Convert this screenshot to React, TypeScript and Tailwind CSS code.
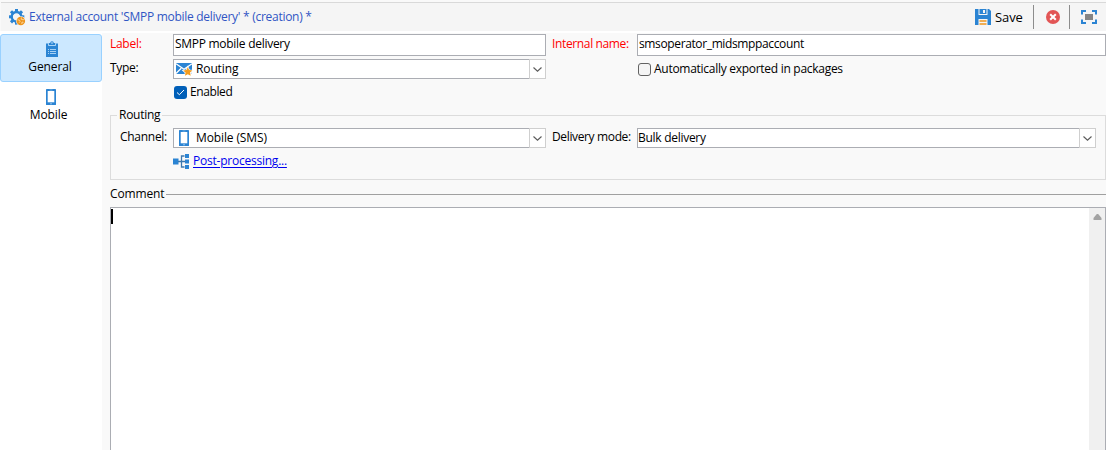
import React from "react";

function GearIcon() {
  const teeth = [0, 45, 90, 135, 180, 225, 270, 315];
  return (
    <svg width="17" height="17" viewBox="0 0 17 17" className="shrink-0">
      <g fill="#2b84d3">
        {teeth.map((a) => (
          <rect key={a} x="6" y="0" width="3" height="4" transform={`rotate(${a} 7.5 7.8)`} />
        ))}
      </g>
      <circle cx="7.5" cy="7.8" r="4.8" fill="none" stroke="#2b84d3" strokeWidth="2.4" />
      <circle cx="11.800" cy="12" r="4.800" fill="#f5f5f5" />
      <circle cx="11.800" cy="12" r="4.300" fill="#ee951c" />
      <path d="M8.500 10.800l2 .3 .6 1.600-1 1M12.500 8.500l-.4 1.700 2 .6 1.500-.6M12.800 15l.2-2 1.500.4" fill="none" stroke="#fbe0b4" strokeWidth="0.8" />
    </svg>
  );
}

function ClipboardIcon() {
  return (
    <svg width="12" height="16" viewBox="0 0 12 16">
      <path d="M0 2.500h3V2h1.200a1.800 1.800 0 0 1 3.600 0H9v.5h3V16H0z" fill="#2b84d3" />
      <path d="M2.500 2.500v2h7v-2" fill="none" stroke="#cce8ff" strokeWidth="0.8" />
      <circle cx="6" cy="2" r="0.8" fill="#cce8ff" />
      <path d="M2 8.500h1M4 8.500h6M2 10.500h1M4 10.500h6M2 12.500h1M4 12.500h6" stroke="#b5d9f6" strokeWidth="0.9" />
    </svg>
  );
}

function PhoneIcon() {
  return (
    <svg width="10" height="16" viewBox="0 0 10 16" className="shrink-0">
      <rect width="10" height="16" rx="0.6" fill="#2b84d3" />
      <rect x="1.700" y="2" width="6.600" height="11.300" fill="#fff" />
      <path d="M3.500 1h3" stroke="#8fc1ea" strokeWidth="0.7" />
      <circle cx="5" cy="14.700" r="0.7" fill="#b5d9f6" />
    </svg>
  );
}

function MailStarIcon() {
  return (
    <svg width="17" height="14" viewBox="0 0 17 14" className="shrink-0">
      <rect y="1" width="16" height="11" fill="#2b84d3" />
      <path d="M0 1.800l8 5.500 8-5.500M0 11.500l5.200-5.200M16 11.500l-5.200-5.200" fill="none" stroke="#fff" strokeWidth="1.300" />
      <path d="M11.800 5.200l1.400 2.900 3.200.4-2.400 2.100.7 3.200-2.900-1.600-2.900 1.600.7-3.200-2.400-2.100 3.200-.4z" fill="#f39c1f" stroke="#fff" strokeWidth="1.400" paintOrder="stroke" />
    </svg>
  );
}

function TreeIcon() {
  return (
    <svg width="16" height="15" viewBox="0 0 16 15" className="shrink-0">
      <path d="M0 4.500h5.500v6H0zM12 0h4v4h-4zM12 5.500h4v4h-4zM12 11h4v4h-4z" fill="#2b84d3" />
      <path d="M5 7.500h7M11.500 2H8.500v11h3" fill="none" stroke="#3c78ae" strokeWidth="1.300" />
    </svg>
  );
}

function SaveIcon() {
  return (
    <svg width="16" height="16" viewBox="0 0 16 16">
      <path d="M0 0h3.500v6h9V0H14l2 2v14H0z" fill="#2b84d3" />
      <path d="M4.500 0h7v5h-7z" fill="#2b84d3" />
      <path d="M8 1h2v3H8zM3.500 10h9v6h-9z" fill="#f5f5f5" />
      <path d="M4.500 12h7M4.500 15h7" stroke="#ee951c" strokeWidth="1.500" />
    </svg>
  );
}

function CancelIcon() {
  return (
    <svg width="14" height="14" viewBox="0 0 14 14">
      <circle cx="7" cy="7" r="7" fill="#e25555" />
      <path d="M4.200 4.200l5.600 5.600M9.800 4.200l-5.600 5.600" stroke="#fff" strokeWidth="2" />
    </svg>
  );
}

function FullscreenIcon() {
  return (
    <svg width="16" height="14" viewBox="0 0 16 14">
      <path d="M1 4.500V1h4M11 1h4v3.500M15 9.500V13h-4M5 13H1V9.500" fill="none" stroke="#2b84d3" strokeWidth="2" />
      <rect x="4" y="4" width="8" height="6" fill="#858585" />
    </svg>
  );
}

function Select({ icon, children, className }: { icon?: React.ReactNode; children: React.ReactNode; className: string }) {
  return (
    <div className={`flex h-5 border border-[#abadb3] bg-white ${className}`}>
      <div className="flex min-w-0 flex-1 items-center">
        {icon && <span className="flex w-[22px] shrink-0 pl-0.5">{icon}</span>}
        {children}
      </div>
      <div className="-my-px -mr-px flex w-[17px] shrink-0 items-center justify-center border border-[#cfcfcf] bg-white">
        <svg width="9" height="5" viewBox="0 0 9 5">
          <path d="M.5.500l4 3.700 4-3.700" fill="none" stroke="#5a5a5a" strokeWidth="1.100" />
        </svg>
      </div>
    </div>
  );
}

export default function App() {
  return (
    <div className="flex h-[450px] w-[1106px] flex-col overflow-hidden bg-[#f9f9f9] font-['Open_Sans','Noto_Sans',sans-serif] text-[12px] leading-4 tracking-[-0.28px] whitespace-nowrap text-black">
      <header className="mt-0.5 ml-px flex h-[29px] shrink-0 items-center border-t border-[#d9d9d9] bg-[#f5f5f5] pl-2">
        <GearIcon />
        <span className="ml-[3px] text-[#3155c4]">External account 'SMPP mobile delivery' * (creation) *</span>
        <div className="ml-auto flex h-full items-center">
          <SaveIcon />
          <span className="ml-1 w-7 pb-px text-[13px] tracking-[-0.1px]">Save</span>
          <i className="ml-[10px] h-6 w-px bg-[#8c8c8c]" />
          <span className="ml-3"><CancelIcon /></span>
          <i className="ml-[9px] h-6 w-px bg-[#8c8c8c]" />
          <span className="mr-[9px] ml-[11px]"><FullscreenIcon /></span>
        </div>
      </header>
      <div className="flex min-h-0 flex-1 border-t-2 border-white">
        <nav className="w-[102px] shrink-0 bg-white tracking-[-0.1px]">
          <div className="mt-px flex h-12 flex-col items-center rounded-[3px] border border-[#99d1ff] bg-[#cce8ff] pt-1.5">
            <span className="ml-0.5"><ClipboardIcon /></span>
            <span className="mt-0.5 mr-0.5 block">General</span>
          </div>
          <div className="flex h-12 flex-col items-center pt-[7px]">
            <PhoneIcon />
            <span className="mt-0.5 mr-[5px] block">Mobile</span>
          </div>
        </nav>
        <main className="flex min-w-0 flex-1 flex-col pl-2">
          <div className="mt-px flex h-[22px] shrink-0">
            <span className="w-[63px] pt-0.5 text-[#ff0000]">Label:</span>
            <div className="w-[373px] border border-[#abadb3] bg-white pt-px pl-px">SMPP mobile delivery</div>
            <span className="ml-1.5 w-[85px] pt-0.5 tracking-[-0.36px] text-[#ff0000]">Internal name:</span>
            <div className="flex-1 border border-[#abadb3] bg-white pt-px pl-px tracking-[-0.37px]">smsoperator_midsmppaccount</div>
          </div>
          <div className="mt-[3px] flex h-5 shrink-0">
            <span className="w-[63px] pt-px">Type:</span>
            <Select className="w-[373px] tracking-[-0.12px]" icon={<MailStarIcon />}>Routing</Select>
            <div className="ml-[92px] flex items-center">
              <i className="h-[13px] w-[13px] rounded-[3px] border border-[#626262] bg-[#f5f5f5]" />
              <span className="ml-[3px]">Automatically exported in packages</span>
            </div>
          </div>
          <div className="mt-[5px] ml-16 flex h-4 shrink-0 items-center">
            <i className="flex h-[13px] w-[13px] items-center justify-center rounded-[3px] bg-[#005fb8]">
              <svg width="9" height="7" viewBox="0 0 9 7"><path d="M1 3.500l2.400 2.200L8 1" fill="none" stroke="#fff" strokeWidth="1" /></svg>
            </i>
            <span className="ml-[3px] tracking-[-0.4px]">Enabled</span>
          </div>
          <fieldset className="mt-[7px] h-[73px] shrink-0 border border-[#dcdcdc] pl-[9px]">
            <legend className="-ml-[3px] h-4 px-[2px]">Routing</legend>
            <div className="mt-[5px] flex h-5">
              <span className="w-[53px] pt-px">Channel:</span>
              <Select className="w-[373px] tracking-[-0.12px]" icon={<span className="ml-[3px] flex"><PhoneIcon /></span>}>Mobile (SMS)</Select>
              <span className="ml-1.5 w-[85px] pt-px tracking-[-0.36px]">Delivery mode:</span>
              <Select className="w-[459px]">Bulk delivery</Select>
            </div>
            <div className="mt-[5px] ml-[53px] flex items-center text-[#0000ee]">
              <TreeIcon />
              <a className="ml-1 tracking-[-0.23px] underline underline-offset-2">Post-processing...</a>
            </div>
          </fieldset>
          <div className="mt-[6px] flex h-4 shrink-0 items-center">
            <span className="w-14 tracking-[-0.15px]">Comment</span>
            <i className="h-px flex-1 bg-[#a0a0a0]" />
          </div>
          <div className="mt-[5px] flex min-h-0 flex-1 border border-b-0 border-[#abadb3] bg-white">
            <i className="mt-px h-[15px] w-0.5 bg-black" />
            <div className="ml-auto flex w-4 justify-center bg-[#f0f0f0] pt-1.5">
              <svg width="9" height="6" viewBox="0 0 9 6"><path d="M3.800 0h1.400L8.500 4v2h-8V4z" fill="#a3a3a3" /></svg>
            </div>
          </div>
        </main>
      </div>
    </div>
  );
}
